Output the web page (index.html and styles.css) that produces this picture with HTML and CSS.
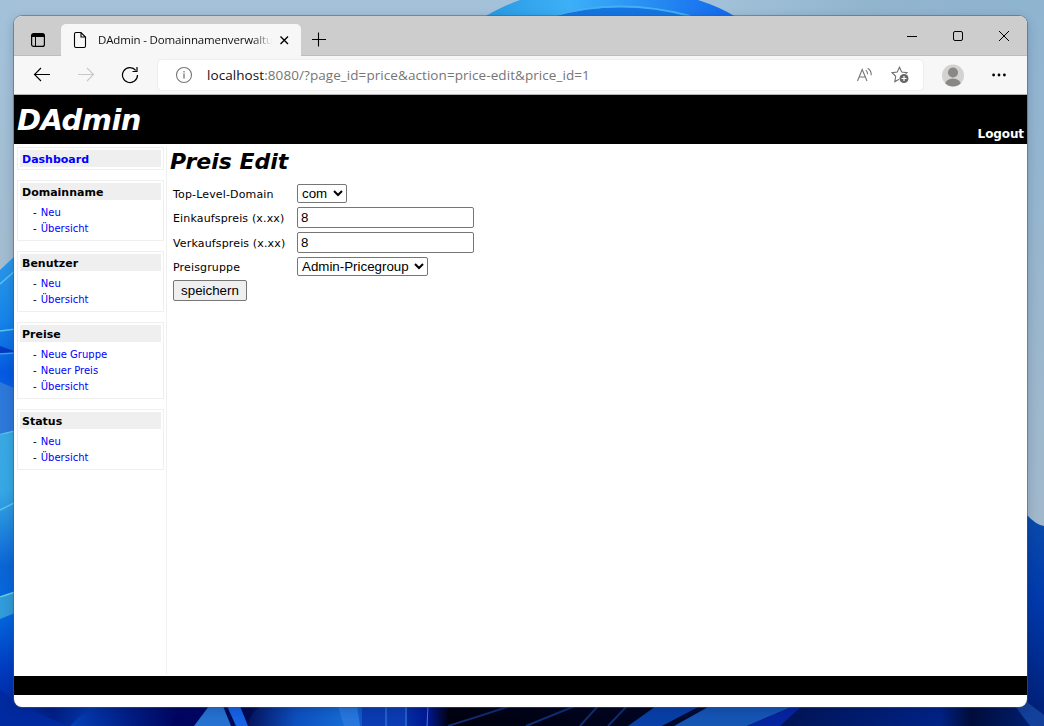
FILE: index.html
```html
<!DOCTYPE html>
<html lang="de">
<head>
<meta charset="utf-8">
<title>DAdmin - Domainnamenverwaltung</title>
<link rel="stylesheet" href="styles.css">
</head>
<body>
<svg class="wallpaper" viewBox="0 0 1044 726" aria-hidden="true">
  <defs>
    <linearGradient id="sky" x1="0" y1="0" x2="0" y2="1"><stop offset="0" stop-color="#a3c2da"/><stop offset=".35" stop-color="#a2bdd0"/><stop offset="1" stop-color="#9fb6c8"/></linearGradient>
    <linearGradient id="skyTop" x1="700" y1="0" x2="1044" y2="0" gradientUnits="userSpaceOnUse"><stop offset="0" stop-color="#a3c2da"/><stop offset=".5" stop-color="#92b5ce"/><stop offset="1" stop-color="#8fb4d1"/></linearGradient>
    <linearGradient id="skyR" x1="0" y1="0" x2="0" y2="1"><stop offset="0" stop-color="#8fb4d1"/><stop offset="1" stop-color="#a2b9cc"/></linearGradient>
    <linearGradient id="bloom" x1="480" y1="0" x2="735" y2="0" gradientUnits="userSpaceOnUse"><stop offset="0" stop-color="#2799e2"/><stop offset=".35" stop-color="#3db0f8"/><stop offset="1" stop-color="#1268ed"/></linearGradient>
    <linearGradient id="left" x1="0" y1="255" x2="0" y2="726" gradientUnits="userSpaceOnUse"><stop offset="0" stop-color="#2c98e8"/><stop offset=".14" stop-color="#1684e8"/><stop offset=".25" stop-color="#0559e0"/><stop offset=".3" stop-color="#0b62e6"/><stop offset=".37" stop-color="#3180dd"/><stop offset=".38" stop-color="#39a9e3"/><stop offset=".5" stop-color="#37a8e5"/><stop offset=".66" stop-color="#0b65d5"/><stop offset=".76" stop-color="#0568df"/><stop offset=".88" stop-color="#003cc0"/><stop offset="1" stop-color="#001f8f"/></linearGradient>
    <linearGradient id="right" x1="0" y1="515" x2="0" y2="726" gradientUnits="userSpaceOnUse"><stop offset="0" stop-color="#0a4bab"/><stop offset=".4" stop-color="#003aac"/><stop offset="1" stop-color="#001d72"/></linearGradient>
    <linearGradient id="bottom" x1="0" y1="0" x2="1044" y2="0" gradientUnits="userSpaceOnUse"><stop offset="0" stop-color="#003ab4"/><stop offset=".05" stop-color="#001f85"/><stop offset=".1" stop-color="#0540b8"/><stop offset=".15" stop-color="#00055f"/><stop offset=".19" stop-color="#000564"/><stop offset=".24" stop-color="#000b50"/><stop offset=".28" stop-color="#0945b5"/><stop offset=".33" stop-color="#156bd5"/><stop offset=".41" stop-color="#001894"/><stop offset=".43" stop-color="#00020f"/><stop offset=".62" stop-color="#000520"/><stop offset=".7" stop-color="#001045"/><stop offset=".8" stop-color="#001a68"/><stop offset=".9" stop-color="#002387"/><stop offset=".93" stop-color="#000d3b"/><stop offset="1" stop-color="#00237d"/></linearGradient>
    <linearGradient id="petal" x1="0" y1="0" x2="1" y2="0"><stop offset="0" stop-color="#04145f"/><stop offset=".5" stop-color="#0d50c0"/><stop offset="1" stop-color="#156bd5"/></linearGradient>
    <linearGradient id="lower" x1="0" y1="0" x2="1" y2="0"><stop offset="0" stop-color="#0540b8"/><stop offset=".6" stop-color="#001a80"/><stop offset="1" stop-color="#00055f"/></linearGradient>
  </defs>
  <rect width="1044" height="726" fill="url(#sky)"/>
  <rect x="1000" width="44" height="530" fill="url(#skyR)"/>
  <rect x="700" width="344" height="17" fill="url(#skyTop)"/>
  <path d="M484 17Q505 5 520 0H698Q720 7 736 17Z" fill="url(#bloom)"/>
  <path d="M552 17Q620-3 694 17Z" fill="#1676e3"/>
  <path d="M552 16Q620-3 690 16" fill="none" stroke="#42b0f2" stroke-width="2"/>
  <path d="M0 270L16 255V726H0Z" fill="url(#left)"/>
  <path d="M0 284L16 270M0 331L16 329M0 510L16 502M0 434L16 431" stroke="#5cc4ec" stroke-width="1.5"/>
  <path d="M0 346L14 351V353L0 355Z" fill="#003bc2"/>
  <path d="M0 354L14 353" stroke="#35a4ee" stroke-width="1.5"/>
  <path d="M0 382L14 388V430L0 434Z" fill="#2d79da"/>
  <path d="M0 598L15 592V613L0 619Z" fill="#329bd9"/>
  <path d="M0 597L15 592" stroke="#69d2dc" stroke-width="1.5"/>
  <path d="M1026 514Q1036 525 1044 526V726H1026Z" fill="url(#right)"/>
  <rect y="706" width="1044" height="20" fill="url(#bottom)"/>
  <path d="M0 690L22 706 68 726H0Z" fill="#002aa0"/>
  <path d="M70 726Q83 711 101 706H180L170 726Z" fill="url(#lower)"/>
  <path d="M194 726L209 706H223L231 726Z" fill="#2672d2"/>
  <path d="M227 706H240L248 726H236Z" fill="#1663e5"/>
  <path d="M248 726Q248 714 262 706H338L344 726Z" fill="url(#petal)"/>
  <path d="M338 706H357L360 726H344Z" fill="#2777df"/>
  <path d="M362 706H386V726H362ZM388 706H407V726H388Z" fill="#0b3cb4"/>
  <path d="M386 706V726M406 706V726M428 706L427 726" stroke="#3b83d8"/>
  <path d="M448 726Q490 713 510 706M526 726L575 706M580 726L598 706M608 726L627 706" fill="none" stroke="#102d72" stroke-width="2"/>
  <path d="M628 726L656 706H700L662 726Z" fill="#0840a8"/>
  <path d="M674 726L710 706H794L747 726Z" fill="#1556b5"/>
  <path d="M747 726L794 706H802L780 726Z" fill="#0524a0"/>
  <path d="M1027 702L1044 715V726H1030L1015 706Z" fill="#12409b"/>
</svg>

<div class="window">
  <header class="tabbar">
    <svg class="workspace" width="16" height="16" viewBox="0 0 16 16"><rect x="1.6" y="1.6" width="12.8" height="12.8" rx="2" fill="none" stroke="#000" stroke-width="1.2"/><path d="M2 2h12v3H2z"/><path d="M5.5 5v9" stroke="#000"/></svg>
    <div class="tab">
      <svg width="14" height="18" viewBox="0 0 14 18"><path d="M1.5 3Q1.5 1.500 3 1.500H8L12.500 6V15Q12.500 16.500 11 16.500H3Q1.500 16.500 1.500 15ZM8 1.500V6H12.500" fill="none" stroke="#000" stroke-width="1.100"/></svg>
      <span class="tab-title">DAdmin - Domainnamenverwaltu</span>
      <svg class="tab-close" width="10" height="10" viewBox="0 0 10 10"><path d="M1.500 1.500l7.500 7.500M9 1.500L1.500 9" stroke="#000" stroke-width="1.400"/></svg>
    </div>
    <svg class="newtab" width="16" height="16" viewBox="0 0 16 16"><path d="M1 7.500h14M7.500 .5v14" stroke="#000" stroke-width="1.100"/></svg>
    <div class="controls">
      <svg width="12" height="12" viewBox="0 0 12 12"><path d="M1 6.500h10" stroke="#000"/></svg>
      <svg width="12" height="12" viewBox="0 0 12 12"><rect x="1.500" y="1.500" width="9" height="9" rx="1.500" fill="none" stroke="#000"/></svg>
      <svg width="12" height="12" viewBox="0 0 12 12"><path d="M1 1l10 10M11 1L1 11" stroke="#000"/></svg>
    </div>
  </header>
  <div class="toolbar">
    <svg class="back" width="18" height="16" viewBox="0 0 18 16"><path d="M17 7.500H1.500M8 1L1.500 7.500 8 14" fill="none" stroke="#000" stroke-width="1.100"/></svg>
    <svg class="forward" width="18" height="16" viewBox="0 0 18 16"><path d="M0 7.500h15.500M9 1L15.500 7.500 9 14" fill="none" stroke="#c8c8c8" stroke-width="1.100"/></svg>
    <svg class="reload" width="18" height="18" viewBox="0 0 18 18"><path d="M16.500 9A7.500 7.500 0 1 1 14.800 4.300M16 1v4.500h-4.500" fill="none" stroke="#000" stroke-width="1.200"/></svg>
    <div class="address">
      <svg width="18" height="18" viewBox="0 0 18 18"><circle cx="9" cy="9" r="7.500" fill="none" stroke="#767676" stroke-width="1.100"/><path d="M9 7.500v5M9 5v1.500" stroke="#767676" stroke-width="1.300"/></svg>
      <span class="url"><b>localhost</b>:8080/?page_id=price&amp;action=price-edit&amp;price_id=1</span>
      <svg class="read" width="18" height="16" viewBox="0 0 18 16"><path d="M1.500 14L6.200 2.500 11 14M3.200 10h6.200M9.800 3.200q1.800 1.500 1.800 4M11.700 1.200q3.800 2.300 3.500 7" fill="none" stroke="#767676" stroke-width="1.100"/></svg>
      <svg class="star" width="19" height="18" viewBox="0 0 19 18"><path d="M8.500 1.300L10.700 6 16 6.700 12.300 10.300 13 15.200 8.500 13 3.800 15.600 4.700 10.300 1 6.700 6.200 6Z" fill="none" stroke="#6e6e6e" stroke-width="1.100"/><circle cx="13" cy="12.500" r="5.200" fill="#fff"/><circle cx="13" cy="12.500" r="4.500" fill="#666"/><path d="M10.500 12.500h5M13 10v5" stroke="#fff" stroke-width="1.200"/></svg>
    </div>
    <svg class="profile" width="22" height="23" viewBox="0 0 22 23"><clipPath id="avatar"><circle cx="11" cy="11.500" r="11"/></clipPath><g clip-path="url(#avatar)"><path d="M0 0h22v23H0z" fill="#d4d2d0"/><circle cx="11" cy="8.500" r="5" fill="#8a8886"/><ellipse cx="11" cy="20.500" rx="8" ry="6" fill="#8a8886"/></g></svg>
    <svg class="more" width="14" height="4" viewBox="0 0 14 4"><g><circle cx="1.600" cy="2" r="1.400"/><circle cx="7" cy="2" r="1.400"/><circle cx="12.400" cy="2" r="1.400"/></g></svg>
  </div>

  <div class="masthead"><span class="brand">DAdmin</span><a class="logout">Logout</a></div>
  <div class="page">
    <nav class="sidebar">
      <section class="box"><h2><a href="#">Dashboard</a></h2></section>
      <section class="box"><h2>Domainname</h2><ul><li>- <a href="#">Neu</a></li><li>- <a href="#">Übersicht</a></li></ul></section>
      <section class="box"><h2>Benutzer</h2><ul><li>- <a href="#">Neu</a></li><li>- <a href="#">Übersicht</a></li></ul></section>
      <section class="box"><h2>Preise</h2><ul><li>- <a href="#">Neue Gruppe</a></li><li>- <a href="#">Neuer Preis</a></li><li>- <a href="#">Übersicht</a></li></ul></section>
      <section class="box"><h2>Status</h2><ul><li>- <a href="#">Neu</a></li><li>- <a href="#">Übersicht</a></li></ul></section>
    </nav>
    <main class="content">
      <h1>Preis Edit</h1>
      <form class="form">
        <label for="tld">Top-Level-Domain</label><select id="tld" class="tld"><option>com</option></select>
        <label for="buy">Einkaufspreis (x.xx)</label><input id="buy" type="text" value="8">
        <label for="sell">Verkaufspreis (x.xx)</label><input id="sell" type="text" value="8">
        <label for="group">Preisgruppe</label><select id="group" class="group"><option>Admin-Pricegroup</option></select>
        <button type="button">speichern</button>
      </form>
    </main>
  </div>
  <footer class="footer"></footer>
</div>
</body>
</html>
```
FILE: styles.css
```css
* { box-sizing: border-box; }
body { margin: 0; width: 1044px; height: 726px; overflow: hidden; padding: 16px 17px 19px 14px; font-family: "DejaVu Sans", sans-serif; }
svg { display: block; flex: none; }
.wallpaper { position: absolute; inset: 0; width: 1044px; height: 726px; z-index: -1; }
.window { display: flex; flex-direction: column; height: 691px; border-radius: 8px; overflow: hidden; background: #fff; box-shadow: 0 0 0 1px rgba(70,90,110,.5), 0 3px 12px rgba(0,20,60,.22); }

.tabbar { display: flex; height: 40px; background: #cdcdcd; border-bottom: 1px solid #bdbdbd; flex: none; }
.workspace { margin: 16px 0 0 16px; }
.tab { display: flex; align-items: center; width: 240px; height: 33px; margin: 8px 0 0 15px; padding: 0 11px 1px 12px; background: #f7f7f7; border-radius: 5px 5px 0 0; }
.tab-title { width: 176px; margin-left: 11px; white-space: nowrap; font: 11.5px/18px "Open Sans", sans-serif; letter-spacing: -.15px; color: #111; -webkit-mask-image: linear-gradient(90deg, #000 155px, transparent 174px); mask-image: linear-gradient(90deg, #000 155px, transparent 174px); }
.tab-close { margin-left: 5px; }
.newtab { margin: 16px 0 0 10px; }
.controls { display: flex; gap: 34px; margin: 14px 17px 0 auto; }

.toolbar { display: flex; align-items: center; height: 39px; background: #f7f7f7; border-bottom: 1px solid #b4b4b4; flex: none; }
.back { margin-left: 19px; }
.forward { margin-left: 27px; }
.reload { margin-left: 25px; }
.address { display: flex; align-items: center; width: 765px; height: 30px; margin-left: 19px; padding-left: 17px; border-radius: 4px; background: #fff; box-shadow: 0 0 2px rgba(0,0,0,.12); }
.url { width: 640px; margin-left: 14px; font: 13.500px/20px "Open Sans", sans-serif; letter-spacing: .07px; color: #767676; white-space: nowrap; }
.url b { font-weight: 400; color: #111; }
.read { margin-left: 9px; }
.star { margin-left: 17px; }
.profile { margin-left: 19px; }
.more { margin-left: 28px; }

.masthead { display: flex; justify-content: space-between; align-items: flex-end; height: 49px; padding: 0 3px 2px; background: #000; color: #fff; flex: none; }
.brand { font: italic bold 29px/44px "DejaVu Sans", sans-serif; letter-spacing: -.55px; }
.logout { font: bold 12px/16px "DejaVu Sans", sans-serif; letter-spacing: -.1px; }

.page { display: flex; flex: 1; padding: 2px 0; }
.sidebar { display: flex; flex-direction: column; gap: 10px; width: 153px; padding: 1px 2px 0 3px; border-right: 1px solid #f0f0f0; }
.box { border: 1px solid #efefef; padding: 2px; }
.box h2 { margin: 0; padding-left: 2px; height: 17px; background: #efefef; font-size: 11px; line-height: 19px; }
.box ul { margin: 5px 0 1px; padding: 0 0 0 13px; list-style: none; font-size: 10px; line-height: 16px; }
.box li a { margin-left: 1px; }
a[href] { color: #00f; text-decoration: none; }
.content { padding-left: 3px; }
h1 { margin: 0; height: 37px; font: italic bold 22px/32px "DejaVu Sans", sans-serif; }
.form { display: grid; grid-template-columns: 124px auto; grid-template-rows: 21px 21px 21px 21px 21px; row-gap: 3.250px; align-items: center; justify-items: start; padding-left: 3px; font-size: 11px; }
.form label { padding-top: 2px; letter-spacing: .15px; }
.form select, .form input, .form button { margin: 0; font: 13.333px "Liberation Sans", Arial, sans-serif; color: #000; }
.form input { width: 177px; height: 21px; padding: 1px 3px; border: 1px solid #767676; border-radius: 2px; background: #fff; }
.form select { height: 19px; padding: 0; border: 1px solid #767676; border-radius: 2px; background-color: #fff; }
.tld { width: 50px; }
.group { width: 131px; }
.form button { width: 74px; height: 21px; padding: 1px 6px; border: 1px solid #767676; border-radius: 2px; background: #efefef; }
.footer { height: 19px; margin-bottom: 12px; background: #000; flex: none; }
```
